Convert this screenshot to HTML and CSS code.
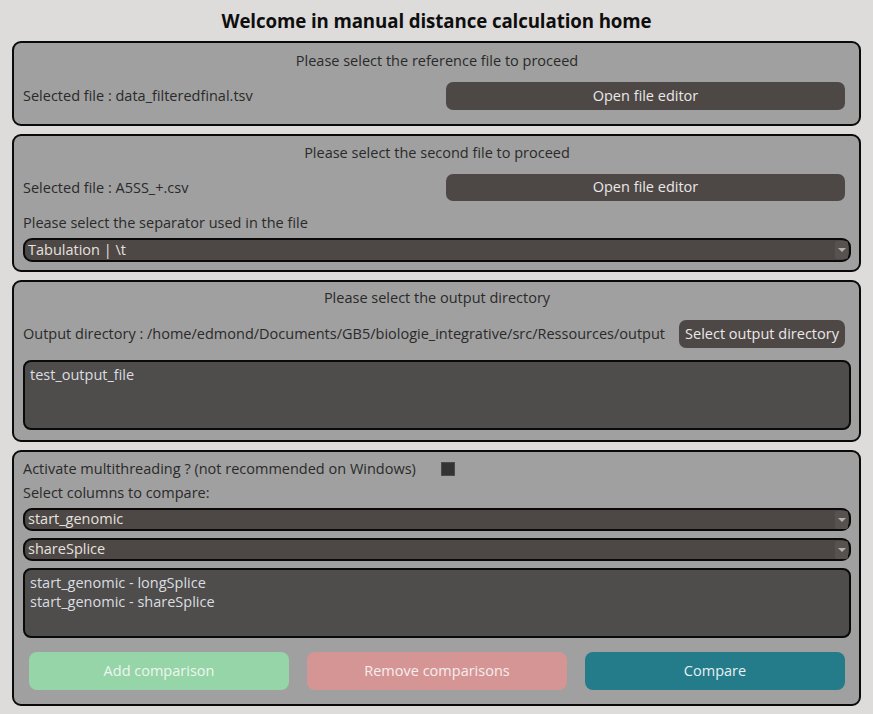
FILE: index.html
```html
<!DOCTYPE html>
<html>
<head>
<meta charset="utf-8">
<link rel="stylesheet" href="styles.css">
</head>
<body>
<div class="app">
  <h1 class="title">Welcome in manual distance calculation home</h1>

  <section class="panel p1">
    <div class="header">Please select the reference file to proceed</div>
    <div class="row r1">
      <span class="label">Selected file : data_filteredfinal.tsv</span>
      <button class="btn dark wide">Open file editor</button>
    </div>
  </section>

  <section class="panel p2">
    <div class="header">Please select the second file to proceed</div>
    <div class="row r1">
      <span class="label">Selected file : A5SS_+.csv</span>
      <button class="btn dark wide">Open file editor</button>
    </div>
    <div class="line sep-label">Please select the separator used in the file</div>
    <div class="combo c-sep"><span class="combo-text">Tabulation | \t</span><span class="arrow"></span></div>
  </section>

  <section class="panel p3">
    <div class="header">Please select the output directory</div>
    <div class="row r3">
      <span class="label">Output directory : /home/edmond/Documents/GB5/biologie_integrative/src/Ressources/output</span>
      <button class="btn dark small">Select output directory</button>
    </div>
    <div class="textbox out">test_output_file</div>
  </section>

  <section class="panel p4">
    <div class="line mt">
      <span>Activate multithreading ? (not recommended on Windows)</span>
      <span class="check"></span>
    </div>
    <div class="line cols">Select columns to compare:</div>
    <div class="combo c1"><span class="combo-text">start_genomic</span><span class="arrow"></span></div>
    <div class="combo c2"><span class="combo-text">shareSplice</span><span class="arrow"></span></div>
    <div class="textbox list">start_genomic - longSplice<br>start_genomic - shareSplice</div>
    <div class="actions">
      <button class="btn act add">Add comparison</button>
      <button class="btn act remove">Remove comparisons</button>
      <button class="btn act compare">Compare</button>
    </div>
  </section>
</div>
</body>
</html>
```
FILE: styles.css
```css
html, body {
  margin: 0;
  padding: 0;
  background: #dddcdb;
  font-family: "Open Sans", "Noto Sans", sans-serif;
  font-size: 14.5px;
  color: #2a2a2a;
}
.app {
  width: 849px;
  padding: 0 12px 8px 12px;
  display: flex;
  flex-direction: column;
  gap: 8px;
}
.title {
  margin: 0;
  height: 41px;
  box-sizing: border-box;
  padding-top: 9px;
  margin-bottom: -8px;
  text-align: center;
  font-size: 18.7px;
  line-height: 24px;
  font-weight: 700;
  color: #0e0e0e;
  letter-spacing: -0.1px;
}
.panel {
  background: #a0a0a0;
  border: 2px solid #0a0a0a;
  border-radius: 9px;
  padding: 0 8px 0 9px;
  display: flex;
  flex-direction: column;
}
.header {
  text-align: center;
  height: 20px;
  line-height: 19px;
}
.line {
  height: 20px;
  line-height: 19px;
  display: flex;
  align-items: center;
}
.row {
  display: flex;
  align-items: center;
  justify-content: space-between;
  line-height: 19px;
}
.label { white-space: nowrap; margin-top: -1px; }
.btn {
  border: none;
  font-family: inherit;
  font-size: 14.5px;
  color: #ebe8e6;
  padding: 0;
  cursor: pointer;
}
.dark {
  background: #4d4746;
  border-radius: 7px;
  height: 28px;
  padding-bottom: 2px;
}
.wide { width: 399px; margin-right: 6px; }
.small { width: 166px; margin-right: 6px; }

.p1 { padding-top: 8px; padding-bottom: 14px; }
.p1 .r1 { margin-top: 11px; }

.p2 { padding-top: 7px; padding-bottom: 8px; }
.p2 .r1 { margin-top: 11px; }
.p2 .r1 .btn { height: 27px; }
.sep-label { margin-top: 11px; }
.c-sep { margin-top: 6px; }

.p3 { padding-top: 6px; padding-bottom: 10px; }
.r3 { margin-top: 12px; }
.out { margin-top: 12px; }

.p4 { padding-top: 6px; padding-bottom: 14px; }
.cols { margin-top: 4px; }
.c1 { margin-top: 6px; }
.c2 { margin-top: 7px; }
.list { margin-top: 7px; }

.combo {
  height: 24px;
  box-sizing: border-box;
  background: #4d4746;
  border: 2px solid #0a0a0a;
  border-radius: 9px;
  display: flex;
  align-items: center;
  justify-content: space-between;
  color: #e6e2df;
  padding-left: 3px;
}
.c1, .c2 { height: 23px; }
.combo-text { line-height: 18px; margin-top: -1px; }
.arrow {
  width: 13px;
  height: 18px;
  margin-right: 1px;
  background: #575150;
  border-radius: 2px;
  position: relative;
}
.arrow::after {
  content: "";
  position: absolute;
  left: 3px;
  top: 7px;
  border-left: 4px solid transparent;
  border-right: 4px solid transparent;
  border-top: 4px solid #b3b0ae;
}
.textbox {
  height: 70px;
  box-sizing: border-box;
  background: #4e4d4c;
  border: 2px solid #0a0a0a;
  border-radius: 8px;
  padding: 3px 5px;
  line-height: 19px;
  color: #dcdde0;
}
.check {
  width: 12px;
  height: 12px;
  background: #333;
  border: 1px solid #4a4a4a;
  margin-left: 25px;
  margin-top: 1px;
}
.actions {
  margin-top: 14px;
  display: flex;
  gap: 18px;
  padding: 0 6px;
}
.act {
  flex: 1;
  height: 38px;
  border-radius: 8px;
  padding-bottom: 1px;
}
.add { background: #95d5a7; color: #eef6f0; }
.remove { background: #d59594; color: #f6eeee; }
.compare { background: #247b89; color: #e6f0f2; }
```
